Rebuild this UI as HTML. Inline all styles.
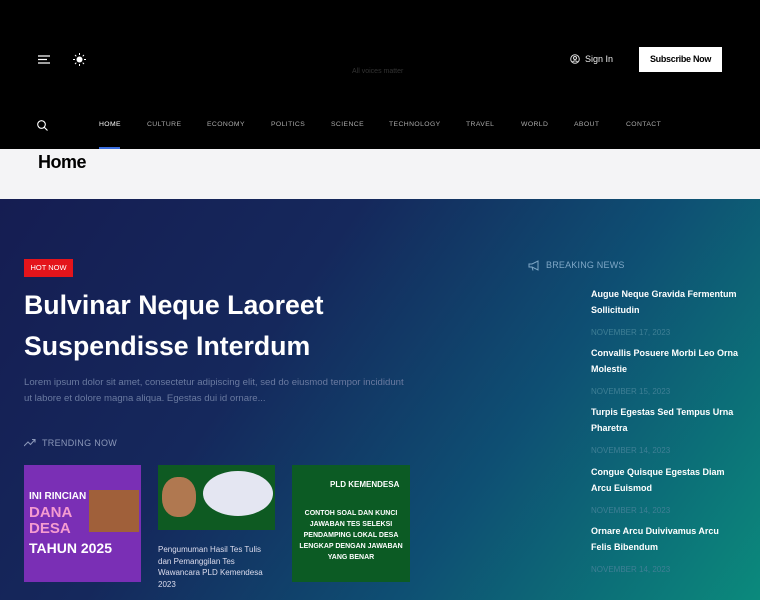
<!DOCTYPE html>
<html><head><meta charset="utf-8"><style>
*{margin:0;padding:0;box-sizing:border-box}
body{width:760px;height:600px;overflow:hidden;font-family:"Liberation Sans",sans-serif;background:#000;position:relative}
.hdr{position:absolute;left:0;top:0;width:760px;height:149px;background:#000}
.abs{position:absolute}
.nav a{position:absolute;top:121px;font-size:6.8px;letter-spacing:.4px;color:#aaa}
.band{position:absolute;top:149px;left:0;width:760px;height:50px;background:#f4f4f6}
.hero{position:absolute;top:199px;left:0;width:760px;height:401px;background:linear-gradient(125deg,#151d52 0%,#15285c 35%,#0e4f73 65%,#0b8a7c 100%);overflow:hidden}
.bn h4{font-size:9px;color:#fff;font-weight:bold;line-height:16px;width:150px}
.bn p{font-size:8px;color:#3f7f95;margin-top:10px}
</style></head><body>
<div class="hdr">
<svg class="abs" style="left:38px;top:55px" width="12" height="9"><path d="M0 1h12M0 4.5h9M0 8h12" stroke="#fff" stroke-width="1.2"/></svg>
<svg class="abs" style="left:73px;top:53px" width="13" height="13"><circle cx="6.5" cy="6.5" r="3" fill="#fff"/><path d="M6.5 0v2M6.5 11v2M0 6.5h2M11 6.5h2M2 2l1.3 1.3M9.7 9.7L11 11M2 11l1.3-1.3M9.7 3.3L11 2" stroke="#fff" stroke-width="1"/></svg>
<div class="abs" style="left:352px;top:68px;font-size:7px;color:#333">All voices matter</div>
<svg class="abs" style="left:570px;top:54px" width="10" height="10"><circle cx="5" cy="5" r="4.3" stroke="#ddd" fill="none"/><circle cx="5" cy="4" r="1.5" stroke="#ddd" fill="none"/><path d="M2.5 8c1-1.5 4-1.5 5 0" stroke="#ddd" fill="none"/></svg>
<div class="abs" style="left:585px;top:54px;font-size:9px;color:#eee">Sign In</div>
<div class="abs" style="left:639px;top:47px;width:83px;height:25px;background:#fff;color:#000;font-size:9px;font-weight:bold;text-align:center;line-height:25px;letter-spacing:-.3px">Subscribe Now</div>
<svg class="abs" style="left:37px;top:120px" width="11" height="11"><circle cx="4.5" cy="4.5" r="3.8" stroke="#fff" fill="none" stroke-width="1.1"/><path d="M7.3 7.3L10.5 10.5" stroke="#fff" stroke-width="1.1"/></svg>
<div class="nav">
<a style="left:99px;color:#fff">HOME</a><a style="left:147px">CULTURE</a><a style="left:207px">ECONOMY</a><a style="left:271px">POLITICS</a><a style="left:331px">SCIENCE</a><a style="left:389px">TECHNOLOGY</a><a style="left:466px">TRAVEL</a><a style="left:521px">WORLD</a><a style="left:574px">ABOUT</a><a style="left:626px">CONTACT</a>
</div>
<div class="abs" style="left:99px;top:147px;width:21px;height:2px;background:#3b6fe0"></div>
</div>
<div class="band"><div class="abs" style="left:38px;top:3px;font-size:18px;font-weight:bold;color:#000;letter-spacing:-.5px">Home</div></div>
<div class="hero">
<div class="abs" style="left:24px;top:60px;width:49px;height:18px;background:#e4141b;color:#fff;font-size:7.5px;text-align:center;line-height:18px">HOT NOW</div>
<div class="abs" style="left:24px;top:86px;font-size:26.7px;font-weight:bold;color:#fff;line-height:41px;width:400px">Bulvinar Neque Laoreet Suspendisse Interdum</div>
<div class="abs" style="left:24px;top:176px;width:390px;font-size:9.6px;color:#6a7aa0;line-height:16px">Lorem ipsum dolor sit amet, consectetur adipiscing elit, sed do eiusmod tempor incididunt ut labore et dolore magna aliqua. Egestas dui id ornare...</div>
<svg class="abs" style="left:24px;top:239px" width="12" height="9"><path d="M0 8l4-4 2.5 2.5L11 1.5M8 1.5h3v3" stroke="#8a97b8" fill="none" stroke-width="1.1"/></svg>
<div class="abs" style="left:42px;top:239px;font-size:9px;color:#8a97b8;letter-spacing:.3px">TRENDING NOW</div>
<div class="abs" style="left:24px;top:266px;width:117px;height:117px;background:#7a2fb5">
<div style="position:absolute;left:5px;top:26px;font-size:10px;font-weight:bold;color:#fff">INI RINCIAN</div>
<div style="position:absolute;left:5px;top:40px;font-size:15px;font-weight:bold;color:#f59bd0;line-height:16px">DANA<br>DESA</div>
<div style="position:absolute;left:5px;top:75px;font-size:14px;font-weight:bold;color:#fff">TAHUN 2025</div>
<div style="position:absolute;left:65px;top:25px;width:50px;height:42px;background:#a0603a"></div>
</div>
<div class="abs" style="left:158px;top:266px;width:117px;height:65px;background:#0e5a22">
<div style="position:absolute;left:45px;top:6px;width:70px;height:45px;border-radius:50%;background:#e4e6f2"></div>
<div style="position:absolute;left:4px;top:12px;width:34px;height:40px;border-radius:45%;background:#b07850"></div>
</div>
<div class="abs" style="left:158px;top:345px;width:114px;font-size:8px;color:#dde;line-height:11.5px">Pengumuman Hasil Tes Tulis dan Pemanggilan Tes Wawancara PLD Kemendesa 2023</div>
<div class="abs" style="left:292px;top:266px;width:118px;height:117px;background:#0c5b24">
<div style="position:absolute;left:38px;top:15px;font-size:8px;font-weight:bold;color:#fff">PLD KEMENDESA</div>
<div style="position:absolute;left:2px;top:43px;width:114px;font-size:7px;font-weight:bold;color:#fff;text-align:center;line-height:11px">CONTOH SOAL DAN KUNCI JAWABAN TES SELEKSI PENDAMPING LOKAL DESA LENGKAP DENGAN JAWABAN YANG BENAR</div>
</div>
<svg class="abs" style="left:528px;top:61px" width="13" height="11"><path d="M1 4h3l6-3v9l-6-3H1zM4 7l1 3.5" stroke="#7fa7c6" fill="none" stroke-width="1"/></svg>
<div class="abs" style="left:546px;top:61px;font-size:9px;color:#7fa7c6;letter-spacing:.2px">BREAKING NEWS</div>
<div class="bn abs" style="left:591px;top:87px"><h4>Augue Neque Gravida Fermentum Sollicitudin</h4><p>NOVEMBER 17, 2023</p></div>
<div class="bn abs" style="left:591px;top:146px"><h4>Convallis Posuere Morbi Leo Orna Molestie</h4><p>NOVEMBER 15, 2023</p></div>
<div class="bn abs" style="left:591px;top:205px"><h4>Turpis Egestas Sed Tempus Urna Pharetra</h4><p>NOVEMBER 14, 2023</p></div>
<div class="bn abs" style="left:591px;top:265px"><h4>Congue Quisque Egestas Diam Arcu Euismod</h4><p>NOVEMBER 14, 2023</p></div>
<div class="bn abs" style="left:591px;top:324px"><h4>Ornare Arcu Duivivamus Arcu Felis Bibendum</h4><p>NOVEMBER 14, 2023</p></div>
</div>
</body></html>
